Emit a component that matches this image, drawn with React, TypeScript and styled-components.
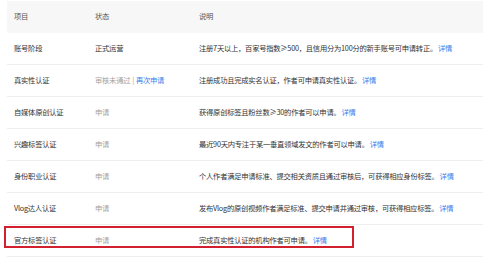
import React from "react";
import styled, { createGlobalStyle } from "styled-components";

const Global = createGlobalStyle`
  html, body { margin: 0; padding: 0; background: #fff; }
  body { font-family: "Noto Sans CJK SC", "Noto Sans", sans-serif; }
`;

const Page = styled.div`
  width: 500px;
  height: 260px;
  padding: 1px 0 0 7px;
  box-sizing: border-box;
  overflow: hidden;
`;

const Table = styled.div`
  width: 476px;
  display: flex;
  flex-direction: column;
`;

const Row = styled.div<{ $head?: boolean }>`
  position: relative;
  display: grid;
  grid-template-columns: 88px 104px 1fr;
  align-items: center;
  height: 32px;
  box-sizing: border-box;
  background: ${(p) => (p.$head ? "#f7f7f7" : "#fff")};
  border-bottom: ${(p) => (p.$head ? "none" : "1px solid #efefef")};
  font-size: 7.3px;
  letter-spacing: -0.25px;
  line-height: 1;
  white-space: nowrap;
`;

const Cell = styled.div<{ $tone?: "main" | "muted" | "head" }>`
  padding-left: 7px;
  color: ${(p) =>
    p.$tone === "muted" ? "#a3a3a3" : p.$tone === "head" ? "#555" : "#333"};
  & + & { padding-left: 0; }
`;

const Link = styled.span<{ $gap?: boolean }>`
  color: #3b7ded;
  margin-left: ${(p) => (p.$gap ? "1px" : "0")};
`;

const Sep = styled.span`
  color: #a3a3a3;
  margin: 0 2px;
`;

const Highlight = styled.div`
  position: absolute;
  left: -3px;
  top: 1px;
  width: 350px;
  height: 22px;
  border: 2px solid #d3202e;
  box-sizing: border-box;
  pointer-events: none;
`;

type Item = {
  name: string;
  status: React.ReactNode;
  muted: boolean;
  desc: string;
};

const items: Item[] = [
  {
    name: "账号阶段",
    status: "正式运营",
    muted: false,
    desc: "注册7天以上，百家号指数≥500，且信用分为100分的新手账号可申请转正。",
  },
  {
    name: "真实性认证",
    status: (
      <>
        审核未通过<Sep>|</Sep>
        <Link>再次申请</Link>
      </>
    ),
    muted: true,
    desc: "注册成功且完成实名认证，作者可申请真实性认证。",
  },
  {
    name: "自媒体原创认证",
    status: "申请",
    muted: true,
    desc: "获得原创标签且粉丝数≥30的作者可以申请。",
  },
  {
    name: "兴趣标签认证",
    status: "申请",
    muted: true,
    desc: "最近90天内专注于某一垂直领域发文的作者可以申请。",
  },
  {
    name: "身份职业认证",
    status: "申请",
    muted: true,
    desc: "个人作者满足申请标准、提交相关资质且通过审核后，可获得相应身份标签。",
  },
  {
    name: "Vlog达人认证",
    status: "申请",
    muted: true,
    desc: "发布Vlog的原创视频作者满足标准、提交申请并通过审核，可获得相应标签。",
  },
  {
    name: "官方标签认证",
    status: "申请",
    muted: true,
    desc: "完成真实性认证的机构作者可申请。",
  },
];

export default function App() {
  return (
    <>
      <Global />
      <Page>
        <Table>
          <Row $head>
            <Cell $tone="head">项目</Cell>
            <Cell $tone="head">状态</Cell>
            <Cell $tone="head">说明</Cell>
          </Row>
          {items.map((it, i) => (
            <Row key={it.name}>
              <Cell $tone="main">{it.name}</Cell>
              <Cell $tone={it.muted ? "muted" : "main"}>{it.status}</Cell>
              <Cell $tone="main">
                {it.desc}
                <Link $gap>详情</Link>
              </Cell>
              {i === items.length - 1 && <Highlight />}
            </Row>
          ))}
        </Table>
      </Page>
    </>
  );
}
